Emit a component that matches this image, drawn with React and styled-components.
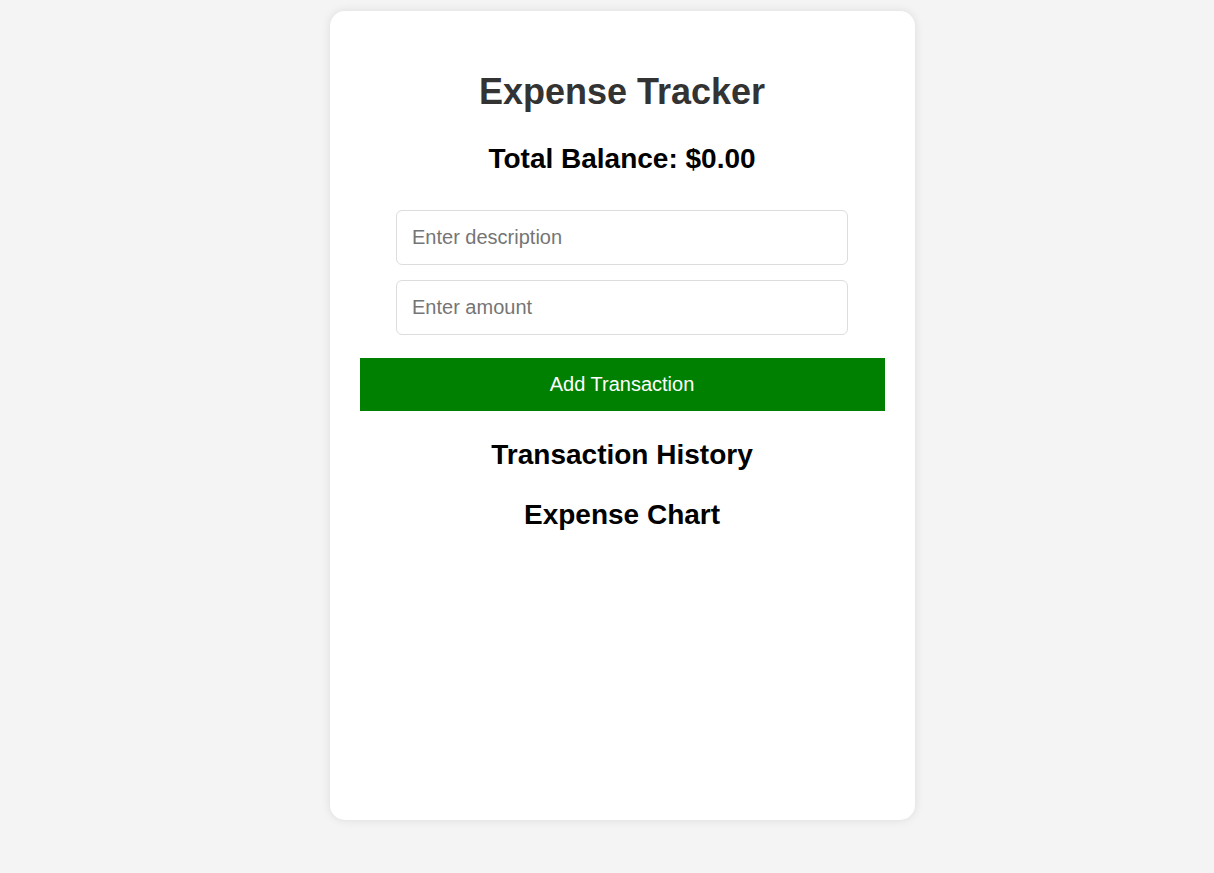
import React from "react";
import styled, { createGlobalStyle } from "styled-components";

const Global = createGlobalStyle`
  html, body { margin: 0; padding: 0; }
  body {
    background: #f4f4f4;
    font-family: "Liberation Sans", Arial, sans-serif;
  }
  * { box-sizing: border-box; }
`;

const Page = styled.div`
  display: flex;
  justify-content: center;
  padding: 11px 0 53px 30px;
`;

const Card = styled.div`
  width: 585px;
  background: #fff;
  border-radius: 15px;
  box-shadow: 0 0 10px rgba(0, 0, 0, 0.1);
  padding: 30px;
  display: flex;
  flex-direction: column;
  align-items: center;
  text-align: center;
`;

const Title = styled.h1`
  margin: 30px 0 0;
  font-size: 36px;
  font-weight: bold;
  color: #333;
  line-height: 41px;
`;

const Heading = styled.h2`
  margin: ${(p) => p.$mt}px 0 0;
  font-size: 28px;
  font-weight: bold;
  color: #000;
  line-height: 32px;
`;

const Form = styled.div`
  display: flex;
  flex-direction: column;
  align-items: center;
  gap: 15px;
  width: 100%;
  margin-top: 35px;
`;

const Input = styled.input`
  width: calc(80% + 32px);
  padding: 15px;
  font-size: 20px;
  line-height: 23px;
  font-family: "Liberation Sans", Arial, sans-serif;
  border: 1px solid #ddd;
  border-radius: 6px;
  outline: none;
  &::placeholder { color: #757575; }
`;

const Button = styled.button`
  width: 100%;
  margin-top: 23px;
  padding: 15px;
  border: none;
  background: #008000;
  color: #fff;
  font-size: 20px;
  line-height: 23px;
  font-family: "Liberation Sans", Arial, sans-serif;
  cursor: pointer;
`;

const ChartArea = styled.div`
  width: 100%;
  height: 259px;
`;

export default function App() {
  return (
    <>
      <Global />
      <Page>
        <Card>
          <Title>Expense Tracker</Title>
          <Heading $mt={31}>Total Balance: $0.00</Heading>
          <Form>
            <Input placeholder="Enter description" />
            <Input placeholder="Enter amount" />
          </Form>
          <Button>Add Transaction</Button>
          <Heading $mt={28}>Transaction History</Heading>
          <Heading $mt={28}>Expense Chart</Heading>
          <ChartArea />
        </Card>
      </Page>
    </>
  );
}
